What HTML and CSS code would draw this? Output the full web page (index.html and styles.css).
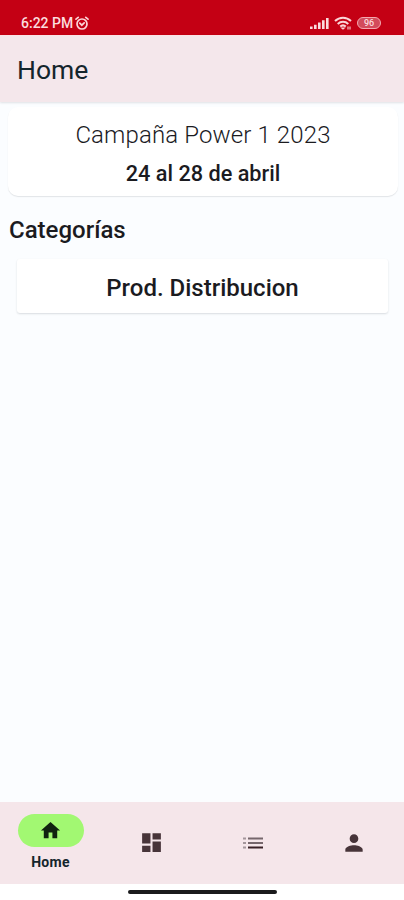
FILE: index.html
```html
<!DOCTYPE html>
<html lang="es">
<head>
    <meta charset="UTF-8">
    <meta name="viewport" content="width=device-width, initial-scale=1.0">
    <title>Home</title>
    <link rel="stylesheet" href="styles.css">
</head>
<body>

<div class="status-bar">
    <span class="time">6:22 PM</span>
    <svg class="alarm" width="14" height="15" viewBox="0 0 14 15" fill="none" stroke="#fbd5d8" stroke-width="1.7" stroke-linecap="round">
        <circle cx="7" cy="8" r="5"/>
        <path d="M1 3.2 3.2 1.4M13 3.2 10.8 1.4M4.8 7.2 6.8 9.2 9.2 6.8"/>
    </svg>
    <div class="status-icons">
        <svg width="19" height="12" viewBox="0 0 19 12" fill="#fbdcde">
            <path d="M0 9.5h2.6V12H0zM4 7.8h2.6V12H4zM8 5.6h2.6V12H8zM12 3.2h2.6V12H12zM16 1h2.6v11H16z"/>
        </svg>
        <svg width="18" height="14" viewBox="0 0 18 14" fill="none" stroke="#fbd5d8" stroke-width="2">
            <path d="M1 5C5.6.6 12.4.6 17 5M3.7 7.9C6.8 5 11.2 5 14.3 7.9M6.2 10.6C7.9 9.1 10.1 9.1 11.8 10.6"/>
            <path d="M7.8 12 9 13l1.2-1zM14 10.5v3M16 10.5v3" stroke-width="1.1"/>
        </svg>
        <div class="battery">96</div>
    </div>
</div>

<header class="app-bar">
    <h1>Home</h1>
</header>

<main>
    <div class="campaign">
        <div class="campaign-name">Campaña Power 1 2023</div>
        <div class="campaign-dates">24 al 28 de abril</div>
    </div>

    <h2>Categorías</h2>
    <div class="category">Prod. Distribucion</div>
</main>

<nav class="bottom-nav">
    <a class="nav-item active">
        <span class="pill">
            <svg width="23" height="23" viewBox="0 0 24 24" fill="#102310"><path d="M10 20v-6h4v6h5v-8h3L12 3 2 12h3v8z"/></svg>
        </span>
        <span class="nav-label">Home</span>
    </a>
    <a class="nav-item">
        <svg width="25" height="25" viewBox="0 0 24 24" fill="#473439"><path d="M3 13h8V3H3zM3 21h8v-6H3zM13 21h8V11h-8zM13 3v6h8V3z"/></svg>
    </a>
    <a class="nav-item">
        <svg width="20" height="12" viewBox="0 0 20 12">
            <path fill="#a4969b" d="M0 .5h3v2H0zM0 5h3v2H0zM0 9.5h3v2H0z"/>
            <path fill="#76676c" d="M5 .5h15v2H5zM5 5h15v2H5z"/>
            <path fill="#382126" d="M5 9.5h15v2H5z"/>
        </svg>
    </a>
    <a class="nav-item">
        <svg width="26" height="26" viewBox="0 0 24 24" fill="#473439"><path d="M12 12c2.210 0 4-1.790 4-4s-1.790-4-4-4-4 1.790-4 4 1.790 4 4 4zm0 2c-2.670 0-8 1.340-8 4v2h16v-2c0-2.660-5.330-4-8-4z"/></svg>
    </a>
</nav>

<div class="gesture-area">
    <div class="gesture-bar"></div>
</div>

</body>
</html>
```

FILE: styles.css
```css
* {
    box-sizing: border-box;
}
body {
    display: flex;
    flex-direction: column;
    height: 900px;
    margin: 0;
    font-family: Roboto, sans-serif;
    background-color: #fbfdff;
    color: #1b1b1f;
}
.status-bar {
    display: flex;
    align-items: center;
    height: 35px;
    padding: 11px 23px 0 21px;
    background-color: #c40014;
    color: #fbdcde;
}
.time {
    font-size: 14px;
    font-weight: 500;
    white-space: nowrap;
}
.alarm {
    margin-left: 2px;
}
.status-icons {
    display: flex;
    align-items: center;
    gap: 5px;
    margin-left: auto;
}
.battery {
    width: 24px;
    height: 12px;
    border: 1.5px solid #f3a9b0;
    border-radius: 6px;
    background-color: #d34b5b;
    color: #fbdcde;
    font-size: 9px;
    font-weight: 500;
    line-height: 10px;
    text-align: center;
}
.app-bar {
    display: flex;
    align-items: center;
    height: 67px;
    padding: 0 17px;
    border-top: 1px solid #fbe3e6;
    background-color: #f4e7eb;
    box-shadow: 0 1px 2px rgba(60, 60, 70, 0.14);
}
h1 {
    margin: 0;
    font-size: 26.5px;
    font-weight: 400;
    color: #14252c;
}
main {
    flex: 1;
}
.campaign {
    height: 89px;
    margin: 5px 6px 0 8px;
    padding-top: 12px;
    border-radius: 10px;
    background-color: #fff;
    box-shadow: 0 1px 1px rgba(40, 50, 60, 0.12);
    text-align: center;
}
.campaign-name {
    font-size: 24px;
    font-weight: 300;
    letter-spacing: 0.12px;
    line-height: 32px;
}
.campaign-dates {
    margin-top: 9px;
    font-size: 21.7px;
    font-weight: 500;
    line-height: 28px;
}
h2 {
    margin: 17px 0 0 9px;
    font-size: 24px;
    font-weight: 500;
    line-height: 34px;
}
.category {
    height: 54px;
    margin: 12px 16px 0 17px;
    border-radius: 3px;
    background-color: #fff;
    box-shadow: 0 1px 2px rgba(40, 50, 60, 0.16);
    font-size: 24px;
    font-weight: 500;
    line-height: 58px;
    text-align: center;
}
.bottom-nav {
    display: flex;
    height: 82px;
    background-color: #f5e6ea;
}
.nav-item {
    display: flex;
    flex: 1;
    flex-direction: column;
    align-items: center;
    justify-content: center;
    padding-bottom: 1px;
}
.active {
    justify-content: flex-start;
    padding-top: 12px;
}
.pill {
    display: flex;
    align-items: center;
    justify-content: center;
    width: 66px;
    height: 33px;
    border-radius: 17px;
    background-color: #a2f872;
}
.nav-label {
    margin-top: 7px;
    font-size: 14px;
    font-weight: 700;
    letter-spacing: 0.3px;
    line-height: 17px;
    color: #14252c;
}
.gesture-area {
    display: flex;
    justify-content: center;
    height: 16px;
    padding-top: 6px;
    background-color: #fff;
}
.gesture-bar {
    width: 149px;
    height: 4px;
    border-radius: 2px;
    background-color: #1a1a1c;
}
```
